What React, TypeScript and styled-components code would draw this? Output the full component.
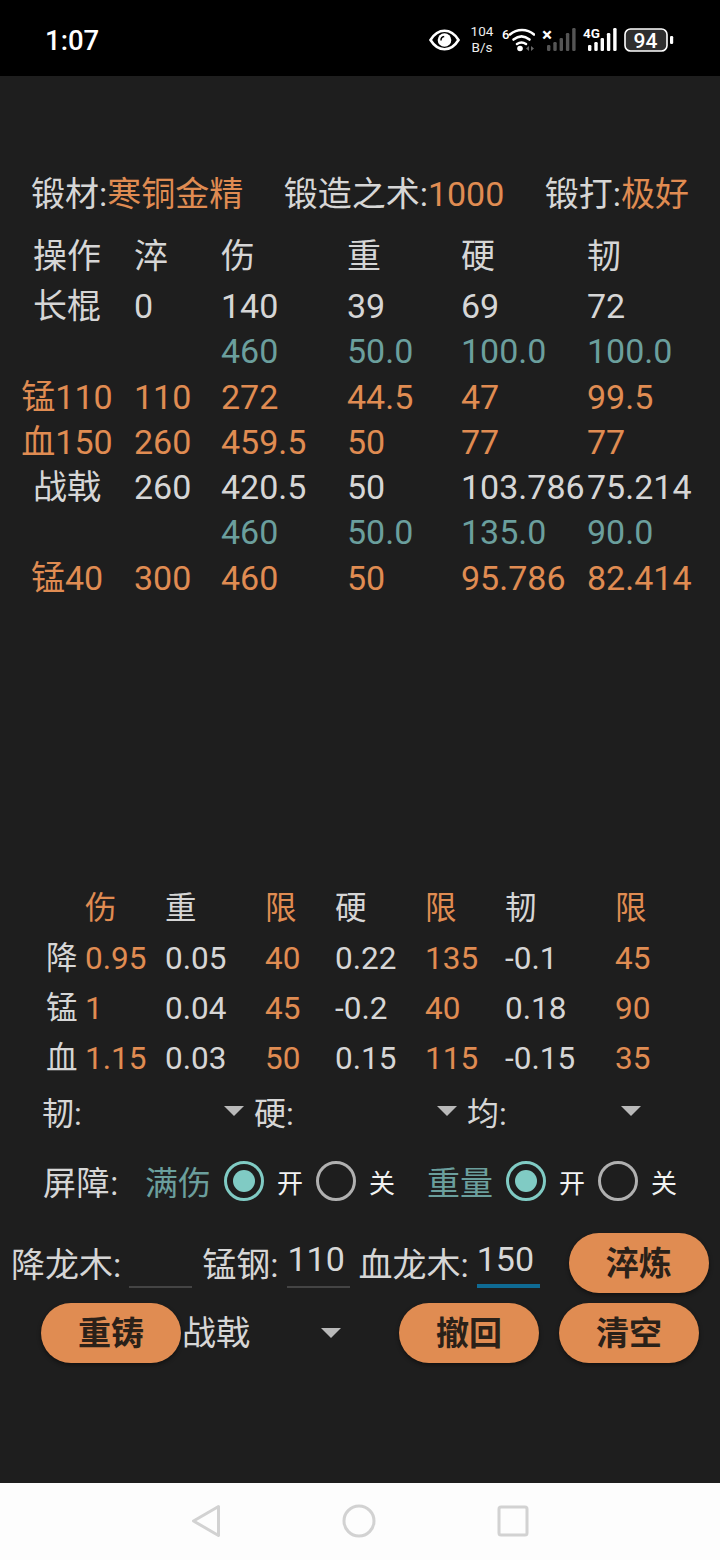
import React from 'react';
import styled, { createGlobalStyle } from 'styled-components';

const ORANGE = '#e08c52';
const TEAL = '#6b9f9d';
const LIGHT = '#d6d6d6';
const FONT = `Roboto, "Noto Sans CJK SC", sans-serif`;

const GlobalStyle = createGlobalStyle`
  html, body { margin: 0; padding: 0; background: #1e1e1e; }
  body { font-family: ${FONT}; }
`;

// --- Frame ---
const Screen = styled.div`
  width: 720px; height: 1560px; display: flex; flex-direction: column; background: #1e1e1e; overflow: hidden;
`;
const StatusBar = styled.div`
  height: 76px; flex: none; background: #000; color: #fff; display: flex; align-items: center; justify-content: space-between;
  padding: 4px 46px 0 45px; box-sizing: border-box;
`;
const Clock = styled.span` font-size: 27.5px; font-weight: 500; `;
const StatusIcons = styled.div` display: flex; align-items: center; gap: 7px; `;
const Speed = styled.div`
  width: 24px; margin: 0 1px 0 3px; font-size: 13.5px; line-height: 15.9px; text-align: center; color: #eee;
`;
const SignalWrap = styled.div` position: relative; width: 34px; height: 24px; `;
const SignalLabel = styled.span<{ $big?: boolean }>`
  position: absolute; left: 0; top: ${p => p.$big ? '-3px' : '-1px'}; font-size: ${p => p.$big ? 19 : 13.5}px; line-height: 1; font-weight: 700; color: #fff;
`;
const Main = styled.div`
  flex: 1; display: flex; flex-direction: column; font-size: 34px; font-weight: 400; color: ${LIGHT};
`;
const NavBar = styled.div`
  height: 77px; flex: none; background: #fdfdfd; display: flex; align-items: center; justify-content: center; gap: 121px;
  padding-bottom: 1px; box-sizing: border-box;
`;

// --- Header ---
const Summary = styled.div`
  margin-top: 92px; height: 46px; padding: 0 31px; display: flex; justify-content: space-between; align-items: center; white-space: nowrap;
`;
const Hot = styled.span` color: ${ORANGE}; `;

// --- Results table ---
const ResultTable = styled.div`
  margin-top: 20px; display: grid; grid-template-columns: 134px 87px 126px 114px 126px 1fr;
  grid-template-rows: 50px repeat(7, 45.3px); line-height: 45px;
`;
const ResultCell = styled.div<{ $tone?: string; $first?: boolean }>`
  color: ${p => p.$tone === 'hot' ? ORANGE : p.$tone === 'limit' ? TEAL : LIGHT};
  text-align: ${p => p.$first ? 'center' : 'left'};
  white-space: nowrap;
`;

// --- Coefficient table ---
const CoefTable = styled.div`
  margin-top: 283px; margin-left: 46px; display: grid; grid-template-columns: 39px 80px 100px 70px 90px 80px 110px 1fr;
  grid-auto-rows: 50px; line-height: 50px; font-size: 31.5px;
`;
const CoefCell = styled.div<{ $hot?: boolean }>`
  color: ${p => p.$hot ? ORANGE : LIGHT}; white-space: nowrap;
`;

// --- Dropdown row ---
const PickRow = styled.div`
  margin-top: 2px; margin-left: 42px; height: 50px; display: flex; align-items: center; font-size: 32px; gap: 10px;
`;
const Picker = styled.div<{ $w: number }>`
  width: ${p => p.$w}px; display: flex; justify-content: space-between; align-items: center;
`;
const Caret = styled.span`
  width: 0; height: 0; border-left: 10.5px solid transparent; border-right: 10.5px solid transparent; border-top: 10px solid #b9b9b9; flex: none;
`;

// --- Barrier row ---
const BarrierRow = styled.div`
  margin-top: 20px; margin-left: 43px; height: 50px; display: flex; align-items: center; font-size: 33px;
`;
const BarrierLabel = styled.span` width: 102px; letter-spacing: 0.6px; `;
const Teal = styled.span` width: 79px; color: ${TEAL}; flex: none; `;
const Radio = styled.span<{ $on?: boolean }>`
  width: 40px; height: 40px; flex: none; box-sizing: border-box; border-radius: 50%;
  border: 3.5px solid ${p => p.$on ? '#80cbc4' : '#b0b0b0'};
  display: flex; align-items: center; justify-content: center;
  &::after { content: ''; width: 22px; height: 22px; border-radius: 50%; background: ${p => p.$on ? '#80cbc4' : 'transparent'}; }
`;
const RadioText = styled.span<{ $gap?: number }>`
  width: 26px; flex: none; margin-left: 13px; margin-right: ${p => p.$gap ?? 0}px; font-size: 26px; color: #f2f2f2;
`;

// --- Inputs ---
const InputRow = styled.div`
  margin-top: 27px; margin-left: 11px; height: 60px; display: flex; align-items: center; white-space: nowrap;
`;
const InputLabel = styled.span<{ $gap: number }>`
  margin-right: ${p => p.$gap}px; margin-top: -2px;
`;
const Field = styled.span<{ $active?: boolean; $gap: number }>`
  width: 63px; height: 50px; flex: none; margin-right: ${p => p.$gap}px; box-sizing: border-box; text-align: left;
  line-height: 43px; color: #d8d8d8;
  border-bottom: ${p => p.$active ? '4px solid #0f6b94' : '2px solid #444'};
`;
const ActionButton = styled.button<{ $gap?: number }>`
  width: 140px; height: 60px; flex: none; border: none; border-radius: 30px; background: ${ORANGE}; color: #2a2119; padding: 0 0 4px;
  font-family: ${FONT}; font-size: 33px; font-weight: 700; margin-right: ${p => p.$gap ?? 0}px;
  box-shadow: 0 2px 4px rgba(0,0,0,0.45);
`;
const ActionRow = styled.div`
  margin-top: 10px; margin-left: 41px; height: 60px; display: flex; align-items: center; white-space: nowrap;
`;
const WeaponPicker = styled.div`
  margin-left: 1px; width: 159px; margin-right: 58px; display: flex; justify-content: space-between; align-items: center;
`;
const WeaponName = styled.span` margin-top: -5px; `;

const results: [string, string, string, string, string, string, string][] = [
  ['', '操作', '淬', '伤', '重', '硬', '韧'],
  ['', '长棍', '0', '140', '39', '69', '72'],
  ['limit', '', '', '460', '50.0', '100.0', '100.0'],
  ['hot', '锰110', '110', '272', '44.5', '47', '99.5'],
  ['hot', '血150', '260', '459.5', '50', '77', '77'],
  ['', '战戟', '260', '420.5', '50', '103.786', '75.214'],
  ['limit', '', '', '460', '50.0', '135.0', '90.0'],
  ['hot', '锰40', '300', '460', '50', '95.786', '82.414'],
];

const coefs = [
  ['', '伤', '重', '限', '硬', '限', '韧', '限'],
  ['降', '0.95', '0.05', '40', '0.22', '135', '-0.1', '45'],
  ['锰', '1', '0.04', '45', '-0.2', '40', '0.18', '90'],
  ['血', '1.15', '0.03', '50', '0.15', '115', '-0.15', '35'],
];
const hotCols = [1, 3, 5, 7];

const EyeIcon = () => (
  <svg width="31" height="22" viewBox="0 0 31 22">
    <path d="M1.500 11C5.500 4.500 10.500 1.800 15.500 1.800s10 2.700 14 9.200c-4 6.500-9 9.200-14 9.200S5.500 17.500 1.500 11z" fill="none" stroke="#fff" strokeWidth="2.600" />
    <circle cx="15.500" cy="11" r="6.800" fill="#fff" />
    <path d="M12 11.500a3.800 3.800 0 0 1 3.200-4" fill="none" stroke="#000" strokeWidth="1.500" />
  </svg>
);

const WifiIcon = () => (
  <svg width="33" height="24" viewBox="0 0 33 24">
    <text x="0" y="11" fontSize="13" fontWeight="500" fill="#fff" fontFamily="Roboto, sans-serif">6</text>
    <g fill="none" stroke="#fff" strokeWidth="2.600" strokeLinecap="round">
      <path d="M8 6.500C15 0.500 25 0.500 32 6.500" />
      <path d="M11.500 11.500c5-4 11-4 16 0" />
      <path d="M15 16c3-2 6-2 9 0" />
    </g>
    <circle cx="18" cy="20.500" r="2.800" fill="#fff" />
    <path d="M24 20.500l3-2.500v5zM32 20.500l-3-2.500v5z" fill="#666" />
  </svg>
);

const Signal = ({ dim, label }: { dim?: boolean; label: string }) => {
  const fill = dim ? '#555' : '#fff';
  const heights = [6, 9, 13, 18, 23];
  return (
    <SignalWrap>
      <svg width="34" height="24" viewBox="0 0 34 24">
        {heights.map((h, i) => (
          <rect key={i} x={5 + i * 6.300} y={23 - h} width="3.400" height={h} rx="1.200" fill={fill} />
        ))}
      </svg>
      <SignalLabel $big={dim}>{label}</SignalLabel>
    </SignalWrap>
  );
};

const BatteryIcon = () => (
  <svg width="50" height="24" viewBox="0 0 50 24">
    <rect x="1" y="1" width="42" height="22" rx="5.500" fill="#2f2f2f" stroke="#fff" strokeWidth="1.600" />
    <text x="21.500" y="19.500" fontSize="21" fontWeight="500" fill="#fff" textAnchor="middle" fontFamily="Roboto, sans-serif">94</text>
    <rect x="46" y="8" width="3.200" height="8" rx="1.300" fill="#fff" />
  </svg>
);

const App: React.FC = () => (
  <Screen>
    <GlobalStyle />
    <StatusBar>
      <Clock>1:07</Clock>
      <StatusIcons>
        <EyeIcon />
        <Speed>104<br />B/s</Speed>
        <WifiIcon />
        <Signal dim label="×" />
        <Signal label="4G" />
        <BatteryIcon />
      </StatusIcons>
    </StatusBar>

    <Main>
      <Summary>
        <span>锻材:<Hot>寒铜金精</Hot></span>
        <span>锻造之术:<Hot>1000</Hot></span>
        <span>锻打:<Hot>极好</Hot></span>
      </Summary>

      <ResultTable>
        {results.map((row, r) =>
          row.slice(1).map((cell, c) => (
            <ResultCell key={`${r}-${c}`} $tone={row[0]} $first={c === 0}>{cell}</ResultCell>
          ))
        )}
      </ResultTable>

      <CoefTable>
        {coefs.map((row, r) =>
          row.map((cell, c) => (
            <CoefCell key={`${r}-${c}`} $hot={hotCols.includes(c)}>{cell}</CoefCell>
          ))
        )}
      </CoefTable>

      <PickRow>
        <Picker $w={202}>韧:<Caret /></Picker>
        <Picker $w={203}>硬:<Caret /></Picker>
        <Picker $w={174}>均:<Caret /></Picker>
      </PickRow>

      <BarrierRow>
        <BarrierLabel>屏障:</BarrierLabel>
        <Teal>满伤</Teal>
        <Radio $on />
        <RadioText $gap={13}>开</RadioText>
        <Radio />
        <RadioText $gap={32}>关</RadioText>
        <Teal>重量</Teal>
        <Radio $on />
        <RadioText $gap={13}>开</RadioText>
        <Radio />
        <RadioText>关</RadioText>
      </BarrierRow>

      <InputRow>
        <InputLabel $gap={8}>降龙木:</InputLabel>
        <Field $gap={10} />
        <InputLabel $gap={9}>锰钢:</InputLabel>
        <Field $gap={8}>110</Field>
        <InputLabel $gap={8}>血龙木:</InputLabel>
        <Field $gap={29} $active>150</Field>
        <ActionButton>淬炼</ActionButton>
      </InputRow>

      <ActionRow>
        <ActionButton>重铸</ActionButton>
        <WeaponPicker><WeaponName>战戟</WeaponName><Caret /></WeaponPicker>
        <ActionButton $gap={20}>撤回</ActionButton>
        <ActionButton>清空</ActionButton>
      </ActionRow>
    </Main>

    <NavBar>
      <svg width="30" height="34" viewBox="0 0 30 34">
        <path d="M27.500 2.500L2.500 17l25 14.500z" fill="none" stroke="#d2d2d2" strokeWidth="3" strokeLinejoin="round" />
      </svg>
      <svg width="34" height="34" viewBox="0 0 34 34">
        <circle cx="17" cy="17" r="15" fill="none" stroke="#d2d2d2" strokeWidth="3" />
      </svg>
      <svg width="32" height="32" viewBox="0 0 32 32">
        <rect x="2" y="2" width="28" height="28" rx="2" fill="none" stroke="#d2d2d2" strokeWidth="3" />
      </svg>
    </NavBar>
  </Screen>
);

export default App;
